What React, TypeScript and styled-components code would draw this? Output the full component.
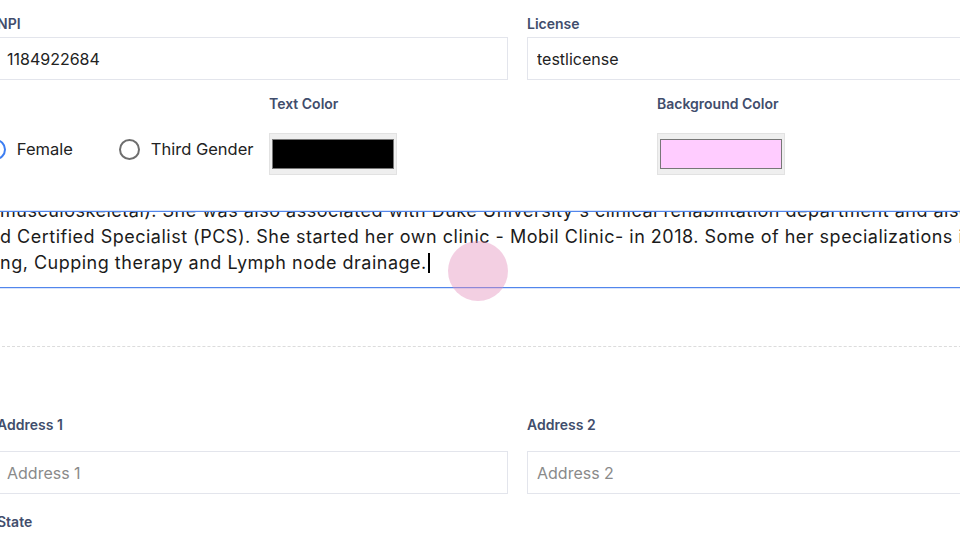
import React from "react";
import styled, { createGlobalStyle } from "styled-components";

const GlobalStyle = createGlobalStyle`
  html, body {
    margin: 0;
    padding: 0;
    background: #ffffff;
    overflow: hidden;
  }
  body {
    font-family: Inter, "Open Sans", "Liberation Sans", sans-serif;
    color: #1f1f1f;
  }
`;

const genders = ["Male", "Female", "Third Gender"];

export default function App() {
  return (
    <Root>
      <GlobalStyle />
      <Form>
        <TwoCols>
          <Field>
            <Label $gap={3}>NPI</Label>
            <Input readOnly value="1184922684" />
          </Field>
          <Field>
            <Label $gap={3}>License</Label>
            <Input readOnly value="testlicense" />
          </Field>
        </TwoCols>

        <GenderRow>
          <Field>
            <Label $gap={14}>Gender</Label>
            <RadioGroup>
              {genders.map((g) => (
                <RadioOption key={g}>
                  <RadioCircle $checked={g === "Female"} />
                  <span>{g}</span>
                </RadioOption>
              ))}
            </RadioGroup>
          </Field>
          <Field>
            <Label $gap={19}>Text Color</Label>
            <ColorBox>
              <Swatch $color="#000000" />
            </ColorBox>
          </Field>
          <Field>
            <Label $gap={19}>Background Color</Label>
            <ColorBox>
              <Swatch $color="#ffccff" />
            </ColorBox>
          </Field>
        </GenderRow>

        <TextArea>
          <TextLine>musculoskeletal). She was also associated with Duke University's clinical rehabilitation department and also</TextLine>
          <TextLine>d Certified Specialist (PCS). She started her own clinic - Mobil Clinic- in 2018. Some of her specializations include</TextLine>
          <TextLine>
            ng, Cupping therapy and Lymph node drainage.<Caret />
          </TextLine>
        </TextArea>

        <Divider />

        <TwoCols $top={68}>
          <Field>
            <Label $gap={16}>Address 1</Label>
            <Input readOnly placeholder="Address 1" />
          </Field>
          <Field>
            <Label $gap={16}>Address 2</Label>
            <Input readOnly placeholder="Address 2" />
          </Field>
        </TwoCols>

        <TwoCols $top={18}>
          <Field>
            <Label $gap={10}>State</Label>
          </Field>
        </TwoCols>
      </Form>
      <ClickRing />
    </Root>
  );
}

const Root = styled.div`
  position: relative;
  width: 960px;
  height: 534px;
  overflow: hidden;
`;

const Form = styled.div`
  display: flex;
  flex-direction: column;
  margin-left: -3px;
  padding-top: 14px;
`;

const TwoCols = styled.div<{ $top?: number }>`
  display: grid;
  grid-template-columns: 511px 511px;
  column-gap: 19px;
  margin-top: ${(p) => p.$top ?? 0}px;
`;

const Field = styled.div`
  display: flex;
  flex-direction: column;
`;

const Label = styled.label<{ $gap: number }>`
  font-size: 14px;
  line-height: 20px;
  font-weight: 600;
  color: #414d6c;
  margin-bottom: ${(p) => p.$gap}px;
  white-space: nowrap;
`;

const Input = styled.input`
  box-sizing: border-box;
  height: 43px;
  width: 100%;
  border: 1px solid #e3e5ec;
  border-radius: 0;
  padding: 0 9px;
  font-family: inherit;
  font-size: 16px;
  color: #222222;
  background: #ffffff;
  outline: none;
  &::placeholder {
    color: #8a8a8a;
  }
`;

const GenderRow = styled.div`
  display: grid;
  grid-template-columns: 400px 388px 388px;
  margin-left: -128px;
  margin-top: 14px;
`;

const RadioGroup = styled.div`
  display: flex;
  align-items: center;
  gap: 46px;
  height: 42px;
`;

const RadioOption = styled.label`
  display: flex;
  align-items: center;
  gap: 11px;
  font-size: 16.5px;
  color: #222222;
  white-space: nowrap;
`;

const RadioCircle = styled.span<{ $checked?: boolean }>`
  box-sizing: border-box;
  width: 21px;
  height: 21px;
  border-radius: 50%;
  border: 2px solid ${(p) => (p.$checked ? "#3d7ef2" : "#6e6e6e")};
  background: ${(p) =>
    p.$checked
      ? "radial-gradient(circle, #3d7ef2 0 4px, #ffffff 4.5px)"
      : "#ffffff"};
`;

const ColorBox = styled.div`
  box-sizing: border-box;
  width: 128px;
  height: 42px;
  padding: 5px 2px;
  background: #efefef;
  border: 1px solid #e2e2e2;
`;

const Swatch = styled.div<{ $color: string }>`
  box-sizing: border-box;
  width: 100%;
  height: 100%;
  border: 1px solid #777777;
  background: ${(p) => p.$color};
`;

const TextArea = styled.div`
  box-sizing: border-box;
  display: flex;
  flex-direction: column;
  justify-content: flex-end;
  overflow: hidden;
  margin-top: 36px;
  margin-left: -8px;
  width: 1100px;
  height: 77px;
  padding: 0 10px 11px 10px;
  border: 1px solid #5286ec;
  box-shadow: 0 0 0 1px rgba(82, 134, 236, 0.22);
`;

const TextLine = styled.div`
  flex: none;
  font-size: 18px;
  letter-spacing: 0.5px;
  line-height: 26px;
  color: #1b1b1b;
  white-space: nowrap;
`;

const Caret = styled.span`
  display: inline-block;
  width: 2px;
  height: 20px;
  margin-left: 1px;
  background: #000000;
  vertical-align: -4px;
`;

const Divider = styled.div`
  margin-top: 58px;
  border-top: 1px dashed #dcdcdc;
  width: 1000px;
`;

const ClickRing = styled.div`
  position: absolute;
  left: 448px;
  top: 241px;
  width: 60px;
  height: 60px;
  border-radius: 50%;
  background: rgba(226, 140, 185, 0.42);
  pointer-events: none;
`;
